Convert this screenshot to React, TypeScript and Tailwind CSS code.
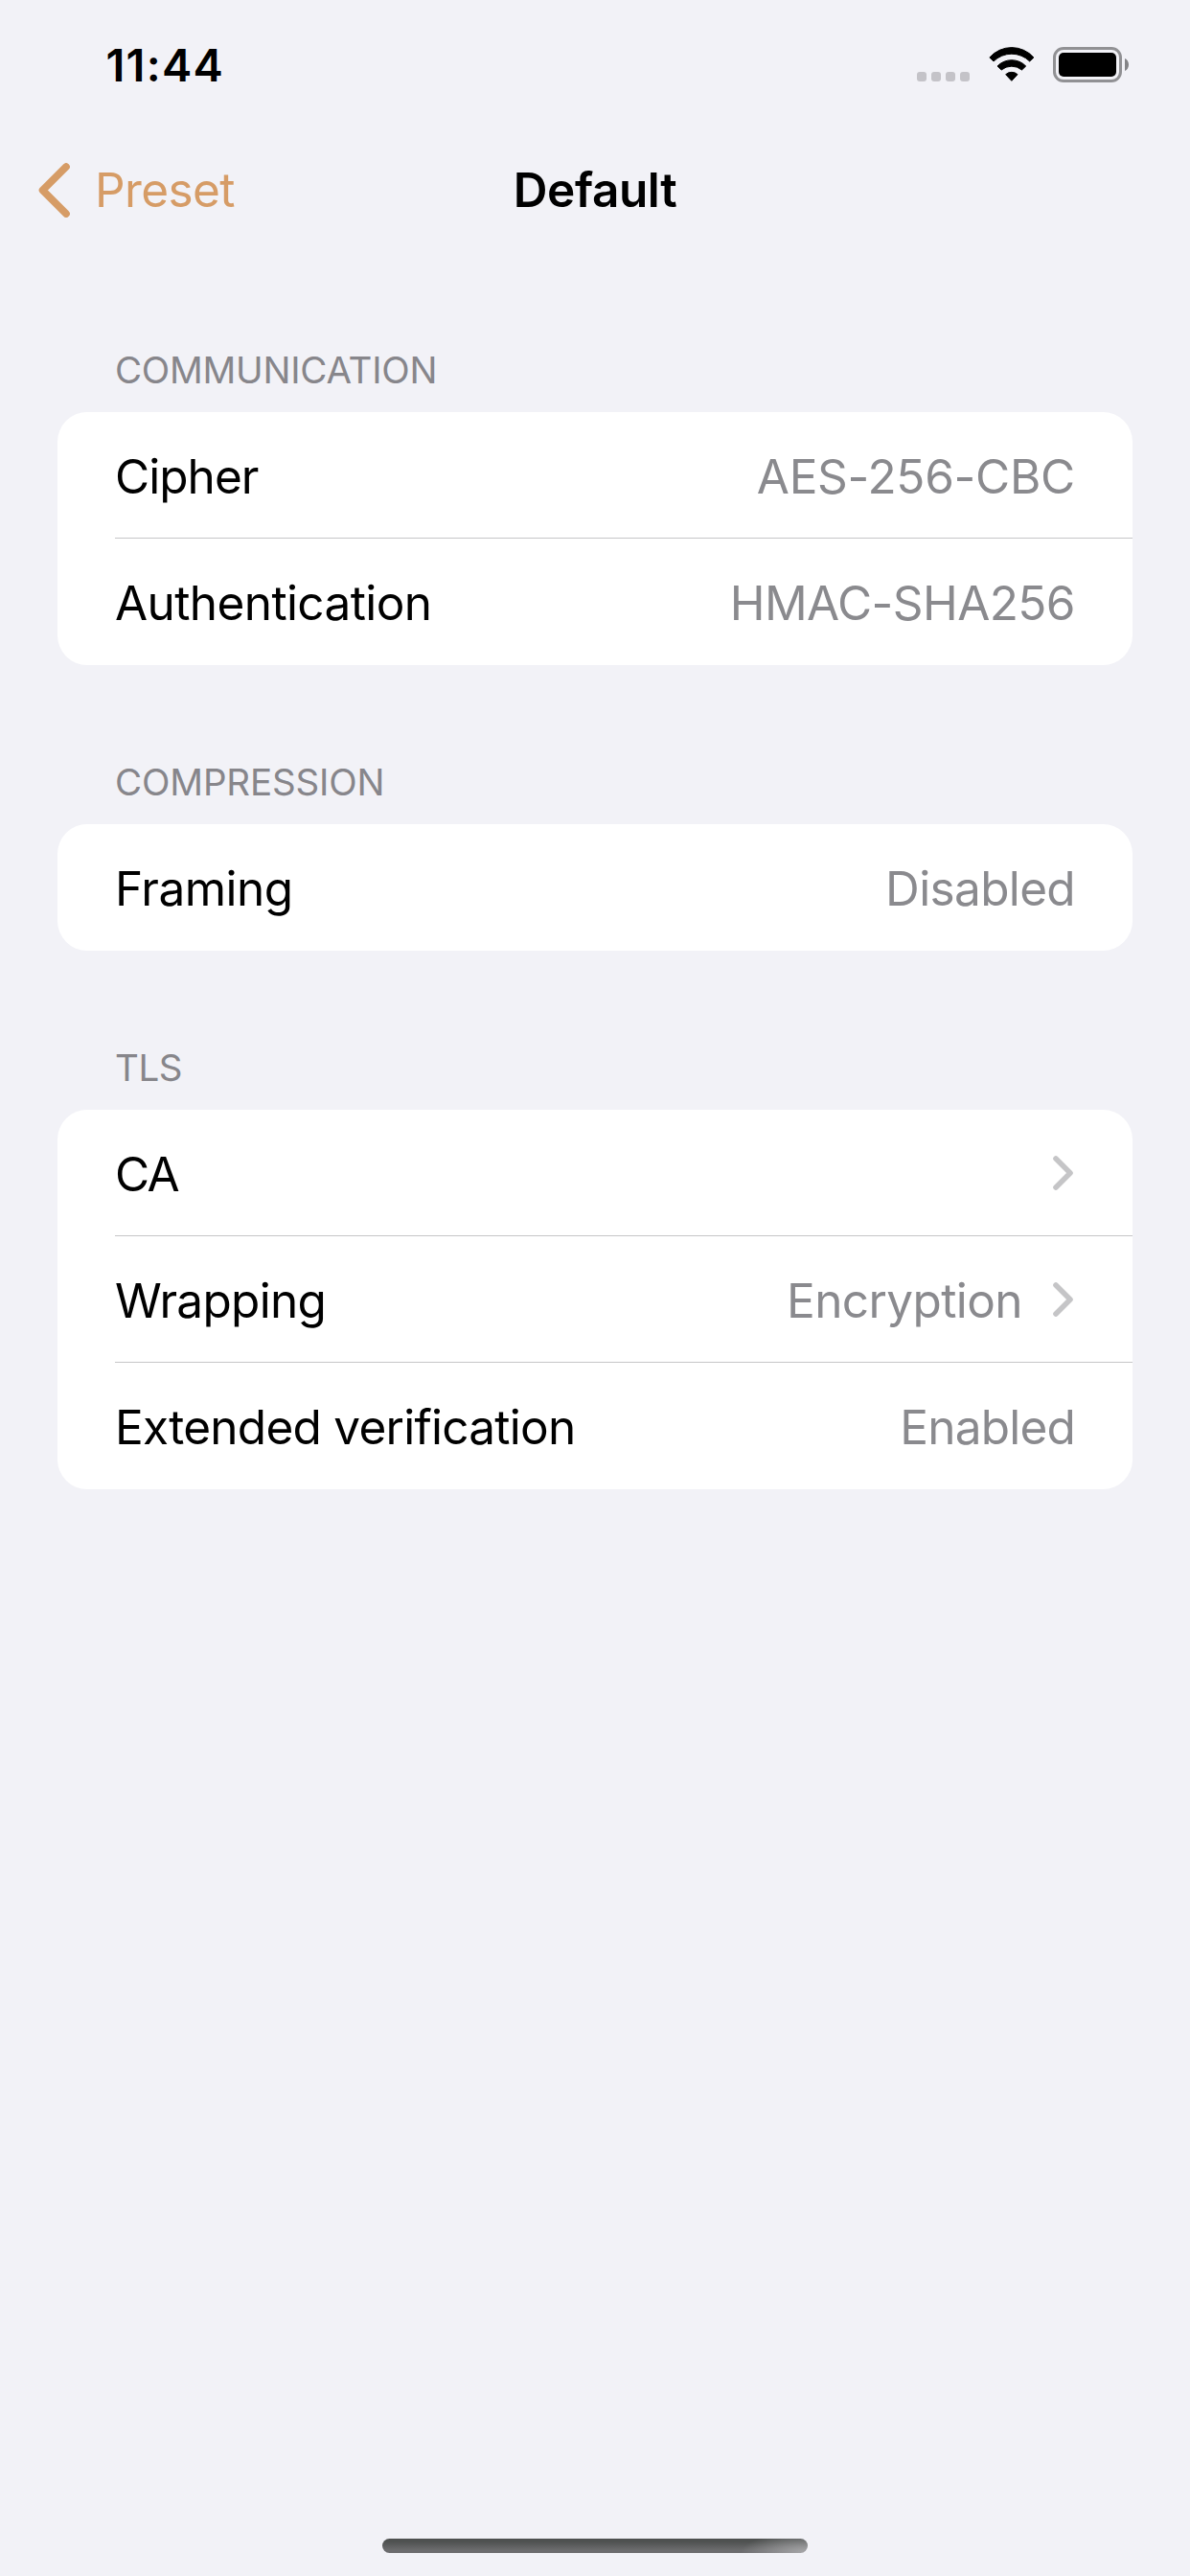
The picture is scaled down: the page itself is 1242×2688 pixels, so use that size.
type RowData = {
  label: string;
  labelClass: string;
  value?: string;
  valueClass?: string;
  link?: boolean;
};

type SectionData = { title: string; titleClass: string; rows: RowData[] };

const sections: SectionData[] = [
  {
    title: "COMMUNICATION",
    titleClass: "tracking-[-0.25px]",
    rows: [
      { label: "Cipher", labelClass: "tracking-[-0.95px]", value: "AES-256-CBC", valueClass: "tracking-[-0.27px]" },
      { label: "Authentication", labelClass: "tracking-[-0.6px]", value: "HMAC-SHA256", valueClass: "tracking-[-0.57px]" },
    ],
  },
  {
    title: "COMPRESSION",
    titleClass: "tracking-[-0.15px]",
    rows: [{ label: "Framing", labelClass: "tracking-[-0.5px]", value: "Disabled", valueClass: "tracking-[-0.65px]" }],
  },
  {
    title: "TLS",
    titleClass: "tracking-[-0.4px]",
    rows: [
      { label: "CA", labelClass: "tracking-[-1.8px]", link: true },
      { label: "Wrapping", labelClass: "tracking-[-0.7px]", value: "Encryption", valueClass: "tracking-[-0.6px]", link: true },
      { label: "Extended verification", labelClass: "tracking-[-0.74px]", value: "Enabled", valueClass: "tracking-[-0.78px]" },
    ],
  },
];

function WifiIcon() {
  return (
    <svg className="ml-5 h-9 w-[47.7px]" viewBox="0 0 143 108" fill="#000" stroke="#000" strokeWidth="3" strokeLinejoin="round">
      <path d="M2.5 33A92 92 0 0 1 140.500 33L128 45A80 80 0 0 0 15 45Z" />
      <path d="M27 60A62 62 0 0 1 116 60L103.500 72A50 50 0 0 0 39.500 72Z" />
      <path d="M53 86A28 28 0 0 1 90 86L71.500 106Z" />
    </svg>
  );
}

function Battery() {
  return (
    <div className="ml-[19.300px] flex items-center">
      <div className="h-[37px] w-[72px] rounded-[11px] border-[3px] border-[#919194] p-[3px]">
        <div className="h-[25px] w-[60px] rounded-[5px] bg-black" />
      </div>
      <svg className="ml-[3px] h-[13px] w-1" viewBox="0 0 4 13">
        <path d="M0 0C2.500 1.200 4 3.600 4 6.500S2.500 11.800 0 13Z" fill="#848487" />
      </svg>
    </div>
  );
}

function StatusBar() {
  return (
    <div className="flex h-[132px] items-start justify-between pr-16 pl-[110.500px]">
      <div className="mt-[38px] text-[47px] leading-[60px] font-semibold tracking-[1.24px]">11:44</div>
      <div className="mt-[49px] flex h-[37px] items-start">
        <div className="mt-[26px] flex gap-[5px]">
          {[0, 1, 2, 3].map((i) => (
            <div key={i} className="size-[10px] rounded-[3px] bg-[#c4c3c8]" />
          ))}
        </div>
        <WifiIcon />
        <Battery />
      </div>
    </div>
  );
}

function NavBar() {
  return (
    <div className="grid h-[132px] grid-cols-3 items-center text-[49.5px] leading-[60px]">
      <div className="flex items-center pl-10 text-[#d69c66]">
        <svg className="h-[57px] w-[33px]" viewBox="0 0 33 57" fill="none" stroke="currentColor" strokeWidth="7.600" strokeLinecap="round" strokeLinejoin="round">
          <path d="M29 4L4.500 28.500L29 53" />
        </svg>
        <span className="ml-[26px] tracking-[-0.6px]">Preset</span>
      </div>
      <h1 className="text-center font-semibold tracking-[-0.4px]">Default</h1>
    </div>
  );
}

function Row({ row, first }: { row: RowData; first: boolean }) {
  return (
    <div className="relative flex h-[132px] items-center justify-between pr-[60px] pl-[60px] text-[49.5px] leading-[60px]">
      {!first && <div className="absolute -top-px right-0 left-[60px] h-px bg-[#c6c6c8]" />}
      <span className={`pt-[2px] ${row.labelClass}`}>{row.label}</span>
      <div className="flex items-center">
        {row.value && <span className={`pt-[2px] text-[#8a8a8e] ${row.valueClass}`}>{row.value}</span>}
        {row.link && (
          <svg className="mr-[2px] ml-8 h-9 w-[21px]" viewBox="0 0 21 36" fill="none" stroke="#c5c5c7" strokeWidth="5.600" strokeLinecap="round" strokeLinejoin="round">
            <path d="M3 3L18 18L3 33" />
          </svg>
        )}
      </div>
    </div>
  );
}

export default function App() {
  return (
    <div className="flex h-[2688px] w-[1242px] flex-col bg-[#f2f2f7] font-[Inter,sans-serif] text-black">
      <StatusBar />
      <NavBar />
      <main className="flex flex-1 flex-col gap-[99px] px-[60px] pt-[99px]">
        {sections.map((s) => (
          <section key={s.title}>
            <h2 className={`mb-[21px] pl-[60px] text-[38.5px] leading-[46px] text-[#87868b] ${s.titleClass}`}>{s.title}</h2>
            <div className="rounded-[31px] bg-white">
              {s.rows.map((r, i) => (
                <Row key={r.label} row={r} first={i === 0} />
              ))}
            </div>
          </section>
        ))}
      </main>
      <div className="mb-6 ml-[399px] h-[15px] w-[444px] rounded-full bg-[radial-gradient(ellipse_70px_22px_at_100%_100%,#a9a9ab,transparent),linear-gradient(to_bottom,#4e5150_20%,#6c6c6e_80%)]" />
    </div>
  );
}
